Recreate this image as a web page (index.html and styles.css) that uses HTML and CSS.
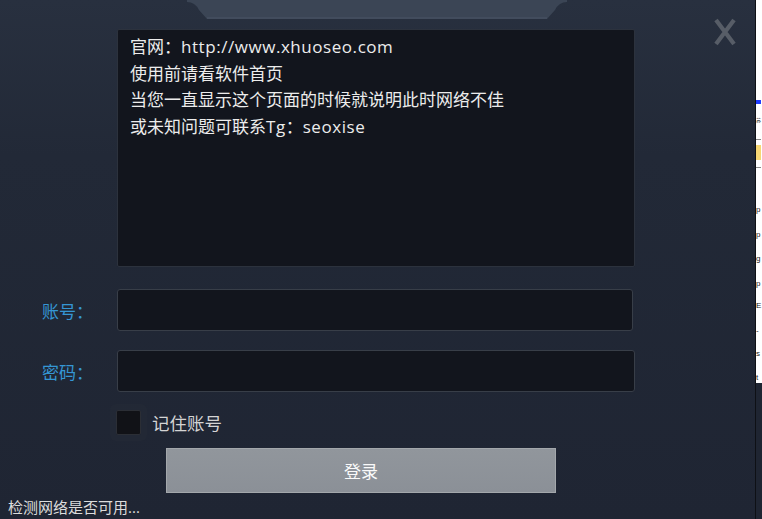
FILE: index.html
```html
<!DOCTYPE html>
<html lang="zh-CN">

<head>
    <meta charset="UTF-8">
    <title>登录</title>
    <link rel="stylesheet" href="styles.css">
</head>

<body>
    <!-- Login window -->
    <div class="window">
        <svg class="top-tab" width="380" height="30" viewBox="0 0 380 30">
            <path d="M0 0 L380 0 L380 2 Q372 2 368 10 L360 19 L20 19 L12 10 Q8 2 0 2 Z" fill="#3b4555"/>
            <path d="M20 18 L360 18" stroke="#4a5566" stroke-width="1"/>
        </svg>

        <svg class="close-btn" width="24" height="30" viewBox="0 0 24 30">
            <path d="M3 3 L21 27 M21 3 L3 27" stroke="#575d67" stroke-width="4.2" stroke-linecap="butt"/>
        </svg>

        <div class="notice">
            <p>官网：<span class="latin">http://www.xhuoseo.com</span></p>
            <p>使用前请看软件首页</p>
            <p>当您一直显示这个页面的时候就说明此时网络不佳</p>
            <p>或未知问题可联系<span class="latin">Tg</span>：<span class="latin">seoxise</span></p>
        </div>

        <div class="field-row first">
            <label class="field-label">账号：</label>
            <div class="field-input short"></div>
        </div>
        <div class="field-row">
            <label class="field-label">密码：</label>
            <div class="field-input"></div>
        </div>

        <div class="remember">
            <span class="check-box"></span>
            <span class="remember-text">记住账号</span>
        </div>

        <button class="login-btn">登录</button>

        <p class="status">检测网络是否可用...</p>
    </div>

    <!-- what shows of the window behind -->
    <div class="behind">
        <span class="mark blue"></span>
        <span class="glyph small g1">苏</span>
        <span class="line l1"></span>
        <span class="mark yellow"></span>
        <span class="line l2"></span>
        <span class="glyph g2">p</span>
        <span class="glyph g3">p</span>
        <span class="glyph g4">g</span>
        <span class="glyph g5">p</span>
        <span class="glyph g6">E</span>
        <span class="glyph g7">-</span>
        <span class="glyph g8">s</span>
        <span class="glyph g9">t</span>
    </div>
</body>

</html>
```

FILE: styles.css
```css
body {
    margin: 0;
    width: 762px;
    height: 519px;
    overflow: hidden;
    background-color: #1f2532;
    font-family: "Open Sans", "Noto Sans CJK SC", sans-serif;
    display: flex;
}

.window {
    position: relative;
    width: 756px;
    height: 519px;
    box-sizing: border-box;
    padding-top: 29px;
    background: linear-gradient(180deg, #28303f 0%, #222937 30%, #1f2533 100%);
    border-right: 1px solid #0e1015;
}

.top-tab {
    position: absolute;
    left: 187px;
    top: 0;
}

.close-btn {
    position: absolute;
    left: 713px;
    top: 17px;
    filter: blur(0.6px);
}

/* Notice box */
.notice {
    margin-left: 117px;
    width: 518px;
    height: 238px;
    box-sizing: border-box;
    padding: 4px 12px;
    background-color: #12151d;
    border: 1px solid #2c323d;
    border-radius: 2px;
    color: #ececec;
    font-size: 17px;
    line-height: 26.5px;
}

.notice p {
    margin: 0;
}

.notice .latin {
    letter-spacing: 0.55px;
}

/* Form rows */
.field-row {
    display: flex;
    align-items: center;
    margin-top: 19px;
}

.field-row.first {
    margin-top: 22px;
}

.field-label {
    width: 117px;
    box-sizing: border-box;
    padding-right: 24px;
    text-align: right;
    color: #3596d4;
    font-size: 17px;
}

.field-input {
    width: 518px;
    height: 42px;
    box-sizing: border-box;
    background-color: #12151d;
    border: 1px solid #383e48;
    border-radius: 3px;
}

.field-input.short {
    width: 516px;
}

.remember {
    display: flex;
    align-items: center;
    margin-top: 18px;
    margin-left: 116px;
}

.check-box {
    width: 25px;
    height: 25px;
    box-sizing: border-box;
    background-color: #111217;
    border: 1px solid #2b2e35;
    border-radius: 2px;
    box-shadow: 0 0 0 6px rgba(40, 46, 58, 0.35);
}

.remember-text {
    margin-left: 11px;
    color: #d4d4d4;
    font-size: 17.5px;
}

.login-btn {
    display: block;
    margin-top: 13px;
    margin-left: 166px;
    width: 390px;
    height: 45px;
    background: linear-gradient(180deg, #91969c 0%, #8b9097 100%);
    border: 1px solid #a3a7ab;
    color: #fafafa;
    font-family: "Open Sans", "Noto Sans CJK SC", sans-serif;
    font-size: 17px;
    cursor: pointer;
}

.status {
    margin: 3px 0 0 8px;
    color: #dcdcdc;
    font-size: 15px;
}

/* Background window peeking out */
.behind {
    position: relative;
    flex: 1;
    height: 519px;
    background: linear-gradient(180deg, #ffffff 0, #ffffff 383px, #1f2532 383px);
    overflow: hidden;
}

.mark {
    position: absolute;
    left: 0;
}

.mark.blue {
    top: 100px;
    width: 5px;
    height: 4px;
    background-color: #1f3cff;
}

.mark.yellow {
    top: 145px;
    width: 5px;
    height: 15px;
    background-color: #f7d774;
}

.line {
    position: absolute;
    left: 0;
    width: 5px;
    height: 1px;
    background-color: #8a8a8a;
}

.line.l1 {
    top: 139px;
}

.line.l2 {
    top: 167px;
}

.glyph {
    position: absolute;
    left: 0;
    font-family: "Liberation Sans", "Noto Sans CJK SC", sans-serif;
    font-size: 8px;
    line-height: 12px;
    color: #222;
}

.glyph.small {
    font-size: 5px;
}

.g1 { top: 114px; }
.g2 { top: 204px; }
.g3 { top: 229px; }
.g4 { top: 253px; }
.g5 { top: 278px; }
.g6 { top: 300px; }
.g7 { top: 325px; }
.g8 { top: 348px; }
.g9 { top: 372px; }
```
